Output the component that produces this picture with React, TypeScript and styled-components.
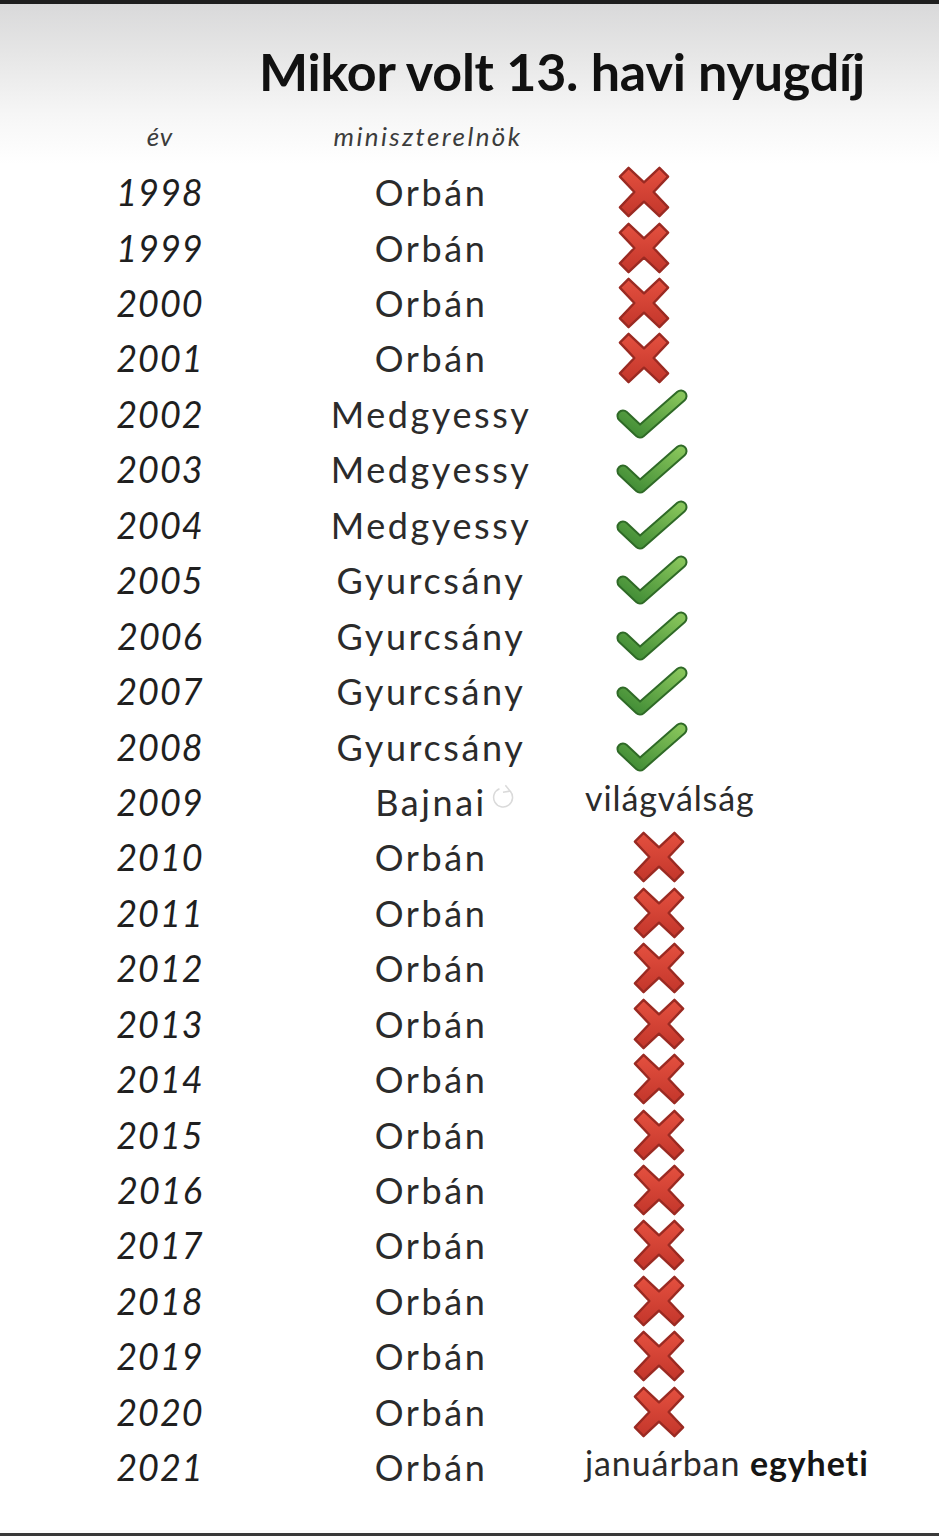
import React from 'react';
import styled, { createGlobalStyle } from 'styled-components';

const GlobalStyle = createGlobalStyle`
  html, body {
    margin: 0;
    padding: 0;
    background: #ffffff;
  }
  body {
    font-family: Lato, "Noto Sans", sans-serif;
  }
`;

type Status = 'no' | 'yes' | 'crisis' | 'week';

interface RowData {
  year: number;
  pm: string;
  status: Status;
  shift?: number;
}

const rows: RowData[] = [
  { year: 1998, pm: 'Orbán', status: 'no', shift: 31 },
  { year: 1999, pm: 'Orbán', status: 'no', shift: 31 },
  { year: 2000, pm: 'Orbán', status: 'no', shift: 31 },
  { year: 2001, pm: 'Orbán', status: 'no', shift: 31 },
  { year: 2002, pm: 'Medgyessy', status: 'yes', shift: 31 },
  { year: 2003, pm: 'Medgyessy', status: 'yes', shift: 31 },
  { year: 2004, pm: 'Medgyessy', status: 'yes', shift: 31 },
  { year: 2005, pm: 'Gyurcsány', status: 'yes', shift: 31 },
  { year: 2006, pm: 'Gyurcsány', status: 'yes', shift: 31 },
  { year: 2007, pm: 'Gyurcsány', status: 'yes', shift: 31 },
  { year: 2008, pm: 'Gyurcsány', status: 'yes', shift: 31 },
  { year: 2009, pm: 'Bajnai', status: 'crisis' },
  ...[2010, 2011, 2012, 2013, 2014, 2015, 2016, 2017, 2018, 2019, 2020].map(
    (year): RowData => ({ year, pm: 'Orbán', status: 'no', shift: 46 })
  ),
  { year: 2021, pm: 'Orbán', status: 'week' },
];

const Page = styled.div`
  width: 939px;
  height: 1536px;
  box-sizing: border-box;
  border-top: 4px solid #1e1e1e;
  border-bottom: 3px solid #3a3a3a;
  background: linear-gradient(
    to bottom,
    #d9d9da 0px,
    #e6e6e6 50px,
    #f6f6f6 110px,
    #ffffff 160px
  );
  overflow: hidden;
  display: flex;
  flex-direction: column;
`;

const Title = styled.h1`
  margin: 0;
  padding: 34px 0 0 259px;
  height: 66px;
  font-family: Lato, "Noto Sans", sans-serif;
  font-weight: 700;
  font-size: 52px;
  line-height: 66px;
  color: #111;
  letter-spacing: -0.2px;
`;

const Table = styled.div`
  display: grid;
  grid-template-columns: 320px 222px 1fr;
  grid-auto-rows: 55.45px;
  align-items: center;
  margin-top: 5px;
`;

const HeadCell = styled.div<{ $center: number; $spacing: number }>`
  font-family: Lato, "Noto Sans", sans-serif;
  font-style: italic;
  font-size: 26px;
  color: #3c3c3c;
  text-align: center;
  letter-spacing: ${({ $spacing }) => $spacing}px;
  height: 55px;
  line-height: 54px;
  margin-left: ${({ $center }) => $center}px;
`;

const Year = styled.div`
  font-family: Lato, "Noto Sans", sans-serif;
  font-style: italic;
  font-size: 36px;
  color: #1f1f1f;
  text-align: center;
  letter-spacing: 1px;
`;

const Name = styled.div`
  font-family: Lato, "Noto Sans", sans-serif;
  font-size: 36px;
  color: #2b2b2b;
  text-align: center;
  letter-spacing: 2.6px;
  position: relative;
`;

const StatusCell = styled.div<{ $shift: number }>`
  display: flex;
  align-items: center;
  padding-left: ${({ $shift }) => 43 + $shift}px;
`;

const Note = styled.span`
  font-family: Lato, "Noto Sans", sans-serif;
  font-size: 34px;
  color: #2b2b2b;
  letter-spacing: 0.9px;
  line-height: 1;
  margin-top: -8px;
  white-space: nowrap;
`;

const Strong = styled.b`
  font-weight: 700;
  color: #151515;
`;

const Spinner = styled.svg`
  position: absolute;
  left: 170px;
  top: 4px;
`;

const Cross = () => (
  <svg width="56" height="54" viewBox="0 0 56 56">
    <defs>
      <linearGradient id="xg" x1="0" y1="0" x2="0" y2="1">
        <stop offset="0" stopColor="#e4503f" />
        <stop offset="1" stopColor="#c3362b" />
      </linearGradient>
    </defs>
    <g transform="translate(28 28)">
      <path
        d="M-25 -16 L-16 -25 L0 -10 L16 -25 L25 -16 L10 0 L25 16 L16 25 L0 10 L-16 25 L-25 16 L-10 0 Z"
        fill="url(#xg)"
        stroke="#9a2a22"
        strokeWidth="2.5"
        strokeLinejoin="round"
      />
    </g>
  </svg>
);

const Check = () => (
  <svg width="72" height="56" viewBox="0 0 72 56">
    <defs>
      <linearGradient id="cg" x1="0" y1="1" x2="1" y2="0">
        <stop offset="0" stopColor="#3e8a34" />
        <stop offset="1" stopColor="#86c45a" />
      </linearGradient>
    </defs>
    <path
      d="M7 30 L24 46 L65 10"
      fill="none"
      stroke="#2f6a27"
      strokeWidth="13"
      strokeLinecap="round"
      strokeLinejoin="round"
    />
    <path
      d="M7 30 L24 46 L65 10"
      fill="none"
      stroke="url(#cg)"
      strokeWidth="9"
      strokeLinecap="round"
      strokeLinejoin="round"
    />
  </svg>
);

const StatusMark: React.FC<{ status: Status }> = ({ status }) => {
  if (status === 'no') return <Cross />;
  if (status === 'yes') return <Check />;
  if (status === 'crisis') return <Note>világválság</Note>;
  return (
    <Note>
      januárban <Strong>egyheti</Strong>
    </Note>
  );
};

export default function App() {
  return (
    <>
      <GlobalStyle />
      <Page>
        <Title>Mikor volt 13. havi nyugdíj</Title>
        <Table>
          <HeadCell $center={0} $spacing={1}>év</HeadCell>
          <HeadCell $center={-6} $spacing={2.4}>miniszterelnök</HeadCell>
          <div />
          {rows.map((r) => (
            <React.Fragment key={r.year}>
              <Year>{r.year}</Year>
              <Name>
                {r.pm}
                {r.pm === 'Bajnai' && (
                  <Spinner width="26" height="26" viewBox="0 0 22 22">
                    <path
                      d="M17 6 A8 8 0 1 1 8 4"
                      fill="none"
                      stroke="#dadada"
                      strokeWidth="1.3"
                    />
                    <path d="M13 1 L17 6 L11 7" fill="none" stroke="#dadada" strokeWidth="1.3" />
                  </Spinner>
                )}
              </Name>
              <StatusCell $shift={r.shift ?? 0}>
                <StatusMark status={r.status} />
              </StatusCell>
            </React.Fragment>
          ))}
        </Table>
      </Page>
    </>
  );
}
